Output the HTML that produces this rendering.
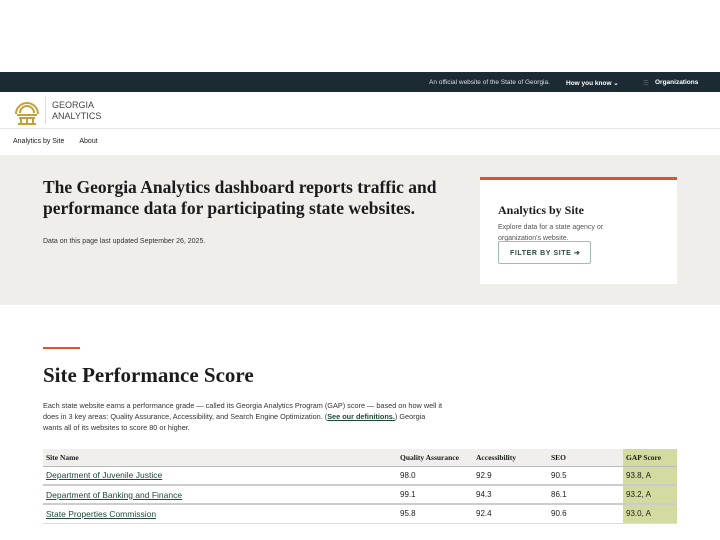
<!DOCTYPE html>
<html><head><style>
*{margin:0;padding:0;box-sizing:border-box}
body{width:720px;height:540px;overflow:hidden;background:#fff;font-family:"Liberation Sans",sans-serif;color:#1b1b1b;position:relative}
.a{position:absolute}
.serif{font-family:"Liberation Serif",serif;font-weight:bold}
td,th{font-size:8px;padding:0 3px;text-align:left}
td a{font-size:8.5px}
th{font-family:"Liberation Serif",serif;font-size:7.5px}
a{color:#1e4a36;text-decoration:underline}
</style></head><body>
<div class="a" style="top:72px;left:0;width:720px;height:20px;background:#1b2a33;color:#fff;font-size:6.5px">
<span class="a" style="left:429px;top:7px;color:#dde">An official website of the State of Georgia.</span>
<span class="a" style="left:566px;top:7px;font-weight:bold">How you know ⌄</span>
<span class="a" style="left:643px;top:7px;color:#667">☰</span>
<span class="a" style="left:655px;top:7px;font-weight:bold">Organizations</span>
</div>
<div class="a" style="top:92px;left:0;width:720px;height:37px;border-bottom:1px solid #e6e6e6">
<svg class="a" style="left:12px;top:4px" width="30" height="30" viewBox="0 0 30 30" fill="none" stroke="#c9a037" stroke-width="2"><path d="M4 18A11 11 0 0 1 26 18"/><path d="M8 17A7 7 0 0 1 22 17"/><path d="M5 19h20M7 22h16"/><path d="M9 22v6M15 22v6M21 22v6M6 28h18"/></svg>
<div class="a" style="left:45px;top:4px;width:1px;height:28px;background:#ddd"></div>
<div class="a" style="left:52px;top:8px;font-size:9px;line-height:11px;color:#444">GEORGIA<br>ANALYTICS</div>
</div>
<div class="a" style="top:138px;left:13px;font-size:7px">Analytics by Site<span style="margin-left:15px">About</span></div>
<div class="a" style="top:155px;left:0;width:720px;height:150px;background:#f0eeeb"></div>
<div class="a serif" style="top:177px;left:43px;width:420px;font-size:17.5px;line-height:21px">The Georgia Analytics dashboard reports traffic and performance data for participating state websites.</div>
<div class="a" style="top:238px;left:43px;font-size:7px;color:#333">Data on this page last updated September 26, 2025.</div>
<div class="a" style="top:177px;left:480px;width:197px;height:107px;background:#fff;border-top:3px solid #d9552b">
<div class="a serif" style="left:18px;top:23px;font-size:12px">Analytics by Site</div>
<div class="a" style="left:18px;top:42px;width:135px;font-size:7px;line-height:11px;color:#555">Explore data for a state agency or organization's website.</div>
<div class="a" style="left:18px;top:61px;width:93px;height:23px;border:1px solid #9cbfae;border-radius:2px;font-size:7px;font-weight:bold;letter-spacing:.6px;color:#2a4a3c;padding:7px 0 0 11px">FILTER BY SITE ➔</div>
</div>
<div class="a" style="top:347px;left:43px;width:37px;height:2px;background:#d9552b"></div>
<div class="a serif" style="top:363px;left:43px;font-size:21px">Site Performance Score</div>
<div class="a" style="top:400px;left:43px;width:400px;font-size:7.3px;line-height:11px;color:#333">Each state website earns a performance grade — called its Georgia Analytics Program (GAP) score — based on how well it does in 3 key areas: Quality Assurance, Accessibility, and Search Engine Optimization. (<b><a>See our definitions.</a></b>) Georgia wants all of its websites to score 80 or higher.</div>
<table class="a" style="top:449px;left:43px;width:634px;border-collapse:collapse">
<tr style="height:17px;background:#f0efec;border-bottom:1px solid #bbb"><th style="width:354px">Site Name</th><th style="width:76px">Quality Assurance</th><th style="width:75px">Accessibility</th><th style="width:75px">SEO</th><th style="background:#d3dba0">GAP Score</th></tr>
<tr style="height:19px;border-bottom:2px solid #ccc"><td><a>Department of Juvenile Justice</a></td><td>98.0</td><td>92.9</td><td>90.5</td><td style="background:#d3dba0">93.8, A</td></tr>
<tr style="height:19px;border-bottom:2px solid #ccc"><td><a>Department of Banking and Finance</a></td><td>99.1</td><td>94.3</td><td>86.1</td><td style="background:#d3dba0">93.2, A</td></tr>
<tr style="height:19px;border-bottom:1px solid #ddd"><td><a>State Properties Commission</a></td><td>95.8</td><td>92.4</td><td>90.6</td><td style="background:#d3dba0">93.0, A</td></tr>
</table>
</body></html>
